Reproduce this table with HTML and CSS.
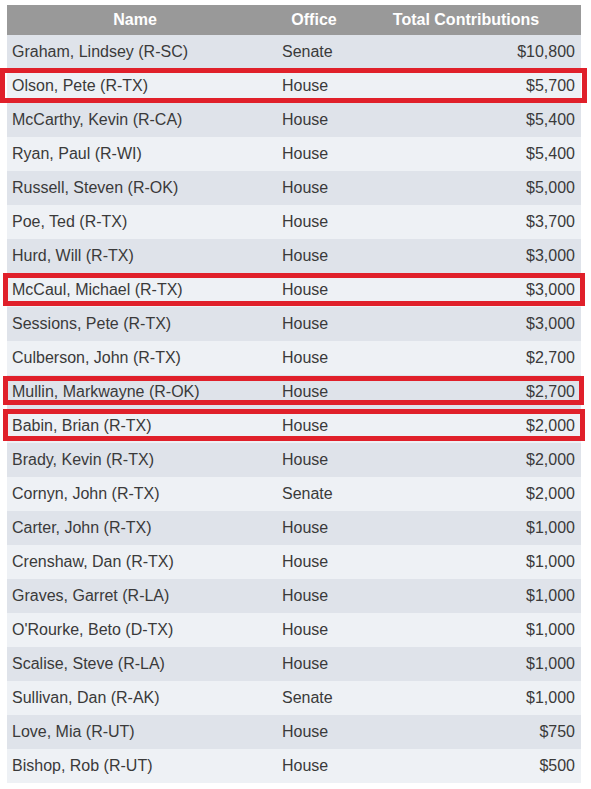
FILE: index.html
```html
<!DOCTYPE html>
<html>
<head>
<meta charset="utf-8">
<link rel="stylesheet" href="styles.css">
</head>
<body>
<div class="table">
  <div class="head">
    <div class="th">Name</div>
    <div class="th">Office</div>
    <div class="th">Total Contributions</div>
  </div>
  <div class="row odd"><div class="td">Graham, Lindsey (R-SC)</div><div class="td">Senate</div><div class="td num">$10,800</div></div>
  <div class="row even mark mark-a"><div class="td">Olson, Pete (R-TX)</div><div class="td">House</div><div class="td num">$5,700</div></div>
  <div class="row odd"><div class="td">McCarthy, Kevin (R-CA)</div><div class="td">House</div><div class="td num">$5,400</div></div>
  <div class="row even"><div class="td">Ryan, Paul (R-WI)</div><div class="td">House</div><div class="td num">$5,400</div></div>
  <div class="row odd"><div class="td">Russell, Steven (R-OK)</div><div class="td">House</div><div class="td num">$5,000</div></div>
  <div class="row even"><div class="td">Poe, Ted (R-TX)</div><div class="td">House</div><div class="td num">$3,700</div></div>
  <div class="row odd"><div class="td">Hurd, Will (R-TX)</div><div class="td">House</div><div class="td num">$3,000</div></div>
  <div class="row even mark mark-b"><div class="td">McCaul, Michael (R-TX)</div><div class="td">House</div><div class="td num">$3,000</div></div>
  <div class="row odd"><div class="td">Sessions, Pete (R-TX)</div><div class="td">House</div><div class="td num">$3,000</div></div>
  <div class="row even"><div class="td">Culberson, John (R-TX)</div><div class="td">House</div><div class="td num">$2,700</div></div>
  <div class="row odd mark mark-c"><div class="td">Mullin, Markwayne (R-OK)</div><div class="td">House</div><div class="td num">$2,700</div></div>
  <div class="row even mark mark-d"><div class="td">Babin, Brian (R-TX)</div><div class="td">House</div><div class="td num">$2,000</div></div>
  <div class="row odd"><div class="td">Brady, Kevin (R-TX)</div><div class="td">House</div><div class="td num">$2,000</div></div>
  <div class="row even"><div class="td">Cornyn, John (R-TX)</div><div class="td">Senate</div><div class="td num">$2,000</div></div>
  <div class="row odd"><div class="td">Carter, John (R-TX)</div><div class="td">House</div><div class="td num">$1,000</div></div>
  <div class="row even"><div class="td">Crenshaw, Dan (R-TX)</div><div class="td">House</div><div class="td num">$1,000</div></div>
  <div class="row odd"><div class="td">Graves, Garret (R-LA)</div><div class="td">House</div><div class="td num">$1,000</div></div>
  <div class="row even"><div class="td">O'Rourke, Beto (D-TX)</div><div class="td">House</div><div class="td num">$1,000</div></div>
  <div class="row odd"><div class="td">Scalise, Steve (R-LA)</div><div class="td">House</div><div class="td num">$1,000</div></div>
  <div class="row even"><div class="td">Sullivan, Dan (R-AK)</div><div class="td">Senate</div><div class="td num">$1,000</div></div>
  <div class="row odd"><div class="td">Love, Mia (R-UT)</div><div class="td">House</div><div class="td num">$750</div></div>
  <div class="row even"><div class="td">Bishop, Rob (R-UT)</div><div class="td">House</div><div class="td num">$500</div></div>
</div>
</body>
</html>
```
FILE: styles.css
```css
html, body {
  margin: 0;
  padding: 0;
  background: #ffffff;
}
body {
  padding: 5px 0 0 7px;
  font-family: "Liberation Sans", Arial, sans-serif;
  font-size: 16px;
  color: #3a3a3a;
}
.table {
  width: 574px;
}
.head,
.row {
  display: grid;
  grid-template-columns: 270px 88px 216px;
}
.head {
  height: 30px;
  background: #999999;
}
.th {
  display: flex;
  align-items: center;
  justify-content: center;
  padding: 0 19px 1px 5px;
  color: #ffffff;
  font-weight: bold;
}
.row {
  height: 34px;
  position: relative;
}
.odd {
  background: #dfe3ea;
}
.even {
  background: #eef1f5;
}
.td {
  display: flex;
  align-items: center;
  padding: 0 6px 0 5px;
  white-space: nowrap;
}
.num {
  justify-content: flex-end;
}
.mark::after {
  content: "";
  position: absolute;
  border: 5px solid #e0202a;
  pointer-events: none;
}
.mark-a::after {
  left: -7px;
  right: -6px;
  top: -1px;
  bottom: 0;
}
.mark-b::after {
  left: -4px;
  right: -4px;
  top: 0;
  bottom: 1px;
}
.mark-c::after {
  left: -4px;
  right: -3px;
  top: 1px;
  bottom: 4px;
}
.mark-d::after {
  left: -4px;
  right: -4px;
  top: 0;
  bottom: 2px;
}
```
